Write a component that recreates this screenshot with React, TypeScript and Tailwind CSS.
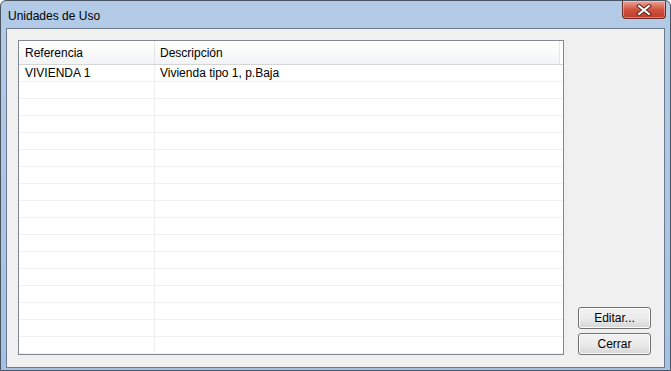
import React from "react";

type Row = { ref: string; desc: string };

const rows: Row[] = [{ ref: "VIVIENDA 1", desc: "Vivienda tipo 1, p.Baja" }];

const font = { fontFamily: '"Liberation Sans", Arial, sans-serif' };

function CloseButton() {
  return (
    <div className="absolute right-[4px] top-0 flex h-[18px] w-[44px] items-center justify-center rounded-b-[4px] border border-t-0 border-[#6d2a22] bg-gradient-to-b from-[#e8a598] via-[#d0533f] to-[#c0392b] shadow-[inset_0_0_0_1px_rgba(255,255,255,0.35)]">
      <svg width="16" height="12" viewBox="0 0 16 12">
        <path d="M3 2 L13 10 M13 2 L3 10" stroke="#5a2018" strokeWidth="4" strokeLinecap="square" />
        <path d="M3 2 L13 10 M13 2 L3 10" stroke="#ffffff" strokeWidth="2" strokeLinecap="square" />
      </svg>
    </div>
  );
}

function Button({ label }: { label: string }) {
  return (
    <button className="flex h-[22px] w-[73px] items-center justify-center rounded-[3px] border border-[#707070] bg-gradient-to-b from-[#f2f2f2] via-[#ebebeb] to-[#d6d6d6] text-[12px] text-black shadow-[inset_0_0_0_1px_#fcfcfc]">
      {label}
    </button>
  );
}

export default function App() {
  const blanks = Array.from({ length: 17 - rows.length });

  return (
    <div
      className="relative flex h-[371px] w-[671px] flex-col overflow-hidden rounded-t-[6px] border border-[#4a5563] bg-gradient-to-b from-[#b3cbe6] to-[#a6c2e2]"
      style={font}
    >
      <CloseButton />

      <div className="flex h-[27px] shrink-0 items-center pl-[7px] pt-[2px] text-[12px] text-black">
        Unidades de Uso
      </div>

      <div className="mx-[5px] mb-[8px] flex flex-1 gap-[14px] border border-[#6b7a8c] bg-[#f0f0f0] p-[11px] pb-[12px] pr-[13px]">
        <div className="flex flex-1 flex-col overflow-hidden border border-[#828790] bg-white">
          <div className="flex h-[24px] shrink-0 border-b border-[#d5d5d5] bg-gradient-to-b from-white to-[#f3f4f6] text-[12px] text-black">
            <div className="flex w-[136px] items-center border-r border-[#e5e5e5] pl-[6px]">Referencia</div>
            <div className="flex flex-1 items-center border-r border-[#e5e5e5] pl-[5px]">Descripción</div>
            <div className="w-[3px] bg-white" />
          </div>

          <div className="flex flex-1 flex-col overflow-hidden text-[12px] text-black">
            {rows.map((r) => (
              <div key={r.ref} className="flex h-[17px] shrink-0 border-b border-[#f0f0f0]">
                <div className="flex w-[136px] items-center border-r border-[#f0f0f0] pl-[6px]">{r.ref}</div>
                <div className="flex flex-1 items-center pl-[5px]">{r.desc}</div>
              </div>
            ))}
            {blanks.map((_, i) => (
              <div key={i} className="flex h-[17px] shrink-0 border-b border-[#f0f0f0]">
                <div className="w-[136px] border-r border-[#f0f0f0]" />
                <div className="flex-1" />
              </div>
            ))}
          </div>
        </div>

        <div className="flex w-[73px] flex-col justify-end gap-[4px]">
          <Button label="Editar..." />
          <Button label="Cerrar" />
        </div>
      </div>
    </div>
  );
}
